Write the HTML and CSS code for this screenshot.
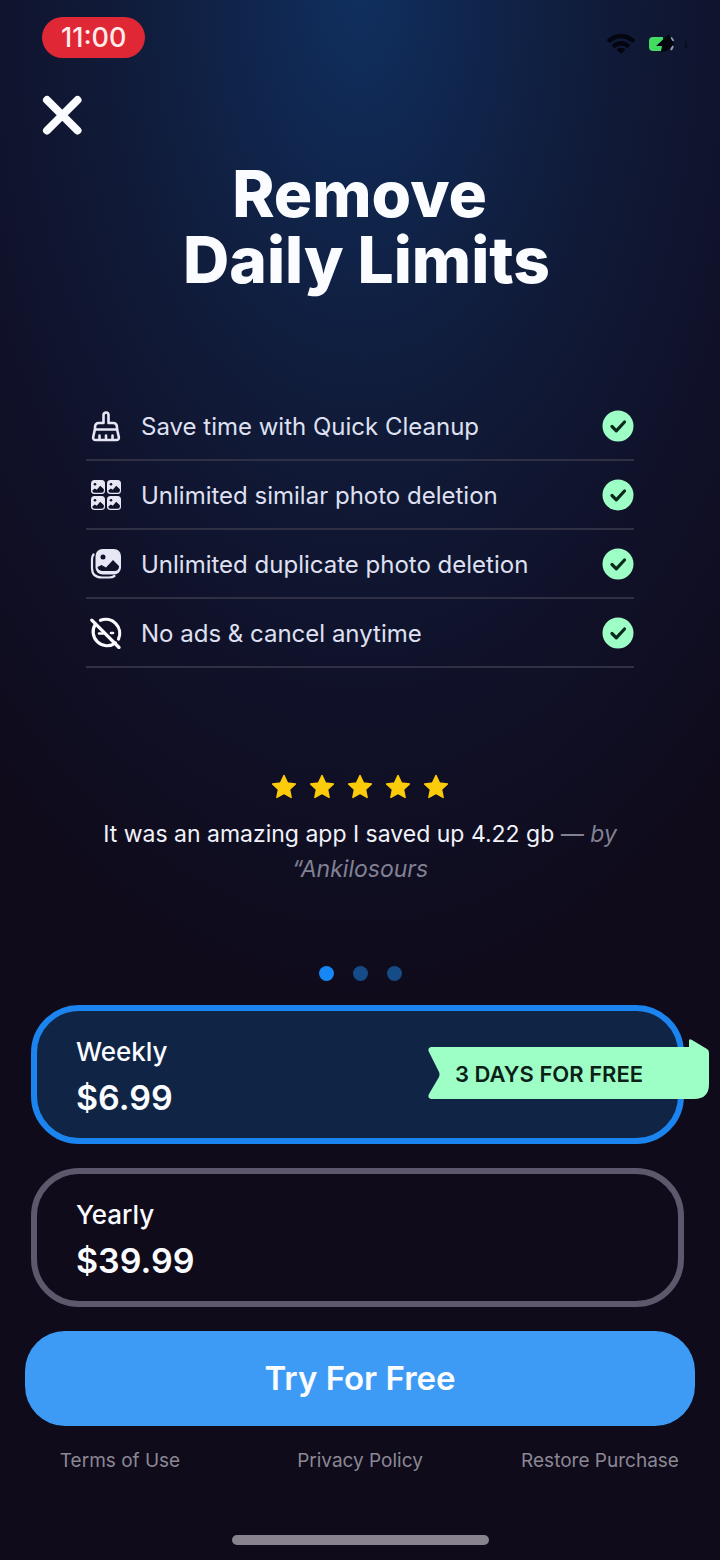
FILE: index.html
```html
<!DOCTYPE html>
<html lang="en">
<head>
<meta charset="utf-8">
<meta name="viewport" content="width=device-width, initial-scale=1">
<title>Remove Daily Limits</title>
<link rel="stylesheet" href="styles.css">
</head>
<body>
<svg class="defs" aria-hidden="true">
  <symbol id="check" viewBox="0 0 32 32"><circle cx="16" cy="16" r="15.500" fill="#9dffc5"/><path d="M10 16.500l4.300 4.300 8.200-8.800" fill="none" stroke="#0c2a1c" stroke-width="3.200" stroke-linecap="round" stroke-linejoin="round"/></symbol>
  <symbol id="star" viewBox="0 0 26 26"><path d="M13 1.500l3.400 7.400 8 1-5.900 5.500 1.600 8-7.100-4-7.100 4 1.600-8L1.600 9.900l8-1z" fill="#fccb0a" stroke="#fccb0a" stroke-width="1.500" stroke-linejoin="round"/></symbol>
  <symbol id="photo" viewBox="0 0 14 14"><rect width="14" height="14" rx="3.500" fill="#e6e6f5"/><circle cx="4" cy="4.200" r="1.300" fill="#10122a"/><path d="M1.300 10.500l2.500-2 2 1.300 3.400-4 3.700 3.400v1.300q0 2.200-2.200 2.200H3.500q-2 0-2.200-2.200z" fill="#10122a"/></symbol>
</svg>
<main class="screen">
  <header class="status">
    <time class="clock">11:00</time>
    <div class="indicators">
      <svg width="30" height="22" viewBox="0 0 30 22" fill="none" stroke="#03060f" stroke-width="4.200" role="img" aria-label="Wi-Fi"><path d="M2 8.500Q15-2.500 28 8.500M7 13.500q8-6.500 16 0"/><path d="M15 21l-4.500-4.500q4.500-3.500 9 0z" fill="#03060f" stroke="none"/></svg>
      <svg width="40" height="20" viewBox="0 0 40 20" role="img" aria-label="Battery charging"><path d="M15 3H5Q1 3 1 7v6q0 4 4 4h8l2-5z" fill="#42dc63"/><path d="M23 3.500l2.500 3.500M25 12l-2 4" fill="none" stroke="#8fa3a8" stroke-width="2"/><path d="M21 0L8 12h6l-1 6q8 0 13-9l-3-4z" fill="#03060f"/><path d="M38 7v7" stroke="#080d20" stroke-width="2"/></svg>
    </div>
  </header>

  <button class="close" type="button" aria-label="Close">
    <svg width="40" height="40" viewBox="0 0 40 40" fill="none" stroke="#fafcff" stroke-width="8" stroke-linecap="round"><path d="M5 5l30.500 30.500M35.500 5L5 35.500"/></svg>
  </button>

  <h1 class="title">Remove&nbsp;<br>Daily Limits</h1>

  <ul class="features">
    <li class="feature">
      <svg class="feature-icon" viewBox="0 0 32 32" fill="none" stroke="#e6e6f5" stroke-width="2.600" stroke-linejoin="round" stroke-linecap="round"><path d="M13.500 13V5a2.500 2.500 0 0 1 5 0V13h4.500q4 0 4 4.500V19l1.800 8q.5 3-2.500 3H5.700q-3 0-2.500-3L5 19V17.500Q5 13 9 13z"/><path d="M5 19.500h22M9.500 25.500v3.500M16 25.500v3.500M22.500 25.500v3.500"/></svg>
      <span class="feature-text">Save time with Quick Cleanup</span>
      <svg class="tick" aria-hidden="true"><use href="#check"/></svg>
    </li>
    <li class="feature">
      <svg class="feature-icon" viewBox="0 0 32 32"><use href="#photo" x="1" y="1" width="14" height="14"/><use href="#photo" x="17" y="1" width="14" height="14"/><use href="#photo" x="1" y="17" width="14" height="14"/><use href="#photo" x="17" y="17" width="14" height="14"/></svg>
      <span class="feature-text">Unlimited similar photo deletion</span>
      <svg class="tick" aria-hidden="true"><use href="#check"/></svg>
    </li>
    <li class="feature">
      <svg class="feature-icon" viewBox="0 0 32 32"><path d="M3.500 6.500Q2 8.500 2 11v9q0 9.500 10 9.500h7q3.500 0 5.500-1.500" fill="none" stroke="#e6e6f5" stroke-width="2.200" stroke-linecap="round"/><rect x="5.500" y="1" width="25.500" height="25.500" rx="7" fill="#e6e6f5"/><circle cx="13" cy="9" r="2.500" fill="#10122a"/><path d="M7.500 19l4-2 4.500 2.500 7-7.500 6 6v1q-.5 4-4.500 4H12q-4-.5-4.500-4z" fill="#10122a"/></svg>
      <span class="feature-text">Unlimited duplicate photo deletion</span>
      <svg class="tick" aria-hidden="true"><use href="#check"/></svg>
    </li>
    <li class="feature">
      <svg class="feature-icon" viewBox="0 0 32 32" fill="none" stroke="#fafaff" stroke-width="3.200" stroke-linecap="round"><path d="M10.500 3.300A14 14 0 0 1 28.500 22M25.500 26A14 14 0 0 1 5.500 7"/><path d="M1.800 3.200L29 30.500"/><path d="M9 16.500h4M21 16h2" stroke-width="2.600"/></svg>
      <span class="feature-text">No ads &amp; cancel anytime</span>
      <svg class="tick" aria-hidden="true"><use href="#check"/></svg>
    </li>
  </ul>

  <section class="review">
    <div class="stars" role="img" aria-label="5 stars">
      <svg class="star"><use href="#star"/></svg><svg class="star"><use href="#star"/></svg><svg class="star"><use href="#star"/></svg><svg class="star"><use href="#star"/></svg><svg class="star"><use href="#star"/></svg>
    </div>
    <p class="quote">It was an amazing app I saved up 4.22 gb <em class="author">— by “Ankilosours</em></p>
  </section>

  <div class="dots" aria-hidden="true"><i class="dot dot-on"></i><i class="dot"></i><i class="dot"></i></div>

  <form class="plans">
    <label class="plan">
      <input class="plan-input" type="radio" name="plan" checked>
      <span class="plan-name">Weekly</span>
      <span class="plan-price">$6.99</span>
      <span class="ribbon">
        <svg class="ribbon-shape" viewBox="0 0 281 60" aria-hidden="true"><path d="M3 8H261V2q0-3 3-1l15 9q2 1 2 4v31q0 15-15 15H3q-4-1-2-5l10-17q1-3 0-5L1 13Q-1 9 3 8z" fill="#9dffc5"/></svg>
        <span class="ribbon-text">3 DAYS FOR FREE</span>
      </span>
    </label>
    <label class="plan">
      <input class="plan-input" type="radio" name="plan">
      <span class="plan-name">Yearly</span>
      <span class="plan-price">$39.99</span>
    </label>
  </form>

  <button class="cta" type="button">Try For Free</button>

  <nav class="links">
    <a class="link" href="#terms">Terms of Use</a>
    <a class="link" href="#privacy">Privacy Policy</a>
    <a class="link" href="#restore">Restore Purchase</a>
  </nav>

  <div class="home-bar"></div>
</main>
</body>
</html>
```
FILE: styles.css
```css
* {
  box-sizing: border-box;
}

body {
  margin: 0;
  background: #0f0b1b;
  color: #fafcff;
  font-family: Inter, "Liberation Sans", sans-serif;
}

.defs {
  position: absolute;
  width: 0;
  height: 0;
}

.screen {
  display: flex;
  flex-direction: column;
  min-height: 100vh;
  padding-bottom: 15px;
  background: radial-gradient(ellipse 580px 1000px at 50% 0, #102f5e 0, #10254c 20%, #101b39 42%, #101129 70%, #0f0b1b 100%);
}

.status {
  display: flex;
  justify-content: space-between;
  align-items: flex-start;
  padding: 17px 32px 0 42px;
}

.clock {
  padding: 0 19px;
  border-radius: 21px;
  background: #df2735;
  color: #ffecea;
  font-size: 27px;
  font-weight: 500;
  line-height: 41px;
}

.indicators {
  display: flex;
  align-items: center;
  gap: 12px;
  padding-top: 16px;
}

.close {
  align-self: flex-start;
  display: flex;
  margin: 37px 0 0 42px;
  padding: 0;
  border: 0;
  background: none;
  cursor: pointer;
}

.title {
  margin: 26px 0 0;
  padding-left: 13px;
  font-size: 64px;
  font-weight: 800;
  line-height: 66px;
  text-align: center;
}

.features {
  margin: 99px 86px 0;
  padding: 0;
  list-style: none;
}

.feature {
  display: flex;
  align-items: center;
  height: 69px;
  padding-left: 4px;
  border-bottom: 2px solid #303044;
}

.feature-icon {
  width: 32px;
  height: 32px;
}

.feature-text {
  flex: 1;
  padding: 2px 0 0 19px;
  color: #dfe0f2;
  font-size: 24px;
}

.tick {
  width: 32px;
  height: 32px;
}

.review {
  margin: 106px 90px 0;
  text-align: center;
}

.stars {
  display: flex;
  justify-content: center;
  gap: 12px;
}

.star {
  width: 26px;
  height: 26px;
}

.quote {
  margin: 17px 0 0;
  color: #f2f2fa;
  font-size: 23px;
  line-height: 35px;
}

.author {
  color: #828093;
}

.dots {
  display: flex;
  justify-content: center;
  gap: 19px;
  margin-top: 79px;
}

.dot {
  width: 15px;
  height: 15px;
  border-radius: 50%;
  background: #154b87;
}

.dot-on {
  background: #1688f5;
}

.plans {
  display: grid;
  gap: 24px;
  margin: 24px 36px 0 31px;
}

.plan {
  position: relative;
  display: flex;
  flex-direction: column;
  padding: 22px 39px 18px;
  border: 6px solid #5d586b;
  border-radius: 48px;
  cursor: pointer;
}

.plan:has(:checked) {
  border-color: #1b84ee;
  background: #102446;
}

.plan-input {
  position: absolute;
  opacity: 0;
}

.plan-name {
  font-size: 26px;
  font-weight: 500;
  line-height: 38px;
}

.plan-price {
  padding-top: 4px;
  font-size: 34px;
  font-weight: 600;
  line-height: 45px;
}

.ribbon {
  position: absolute;
  top: 28px;
  right: -31px;
  width: 281px;
}

.ribbon-shape {
  display: block;
  width: 100%;
}

.ribbon-text {
  position: absolute;
  inset: 8px 0 0 27px;
  color: #0b2118;
  font-size: 22px;
  font-weight: 600;
  line-height: 54px;
}

.cta {
  margin: 24px 25px 0;
  padding: 0;
  border: 0;
  border-radius: 40px;
  background: #3d9bf5;
  color: #fafcff;
  font-family: inherit;
  font-size: 33px;
  font-weight: 600;
  line-height: 95px;
  cursor: pointer;
}

.links {
  display: grid;
  grid-template-columns: repeat(3, 1fr);
  margin-top: 23px;
  text-align: center;
}

.link {
  color: #8b8894;
  font-size: 19px;
  line-height: 24px;
  text-decoration: none;
}

.home-bar {
  align-self: center;
  width: 257px;
  height: 10px;
  margin-top: auto;
  border-radius: 5px;
  background: #88838d;
}
```
